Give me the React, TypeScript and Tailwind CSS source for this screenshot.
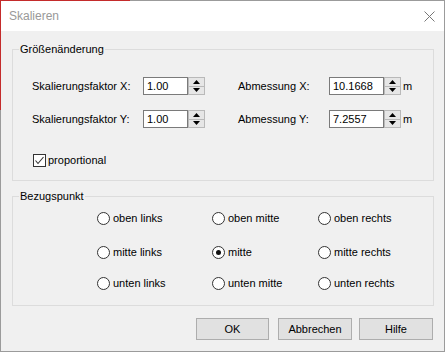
import React from "react";

function Spinner() {
  return (
    <div className="flex h-[18px] w-[17px] flex-col border border-[#b9b9b9] bg-[#e6e6e6]">
      <div className="flex flex-1 items-center justify-center border-b border-[#b9b9b9]">
        <svg width="7" height="4" viewBox="0 0 7 4"><path d="M0 4 L3.5 0 L7 4 Z" fill="#000" /></svg>
      </div>
      <div className="flex flex-1 items-center justify-center">
        <svg width="7" height="4" viewBox="0 0 7 4"><path d="M0 0 L3.5 4 L7 0 Z" fill="#000" /></svg>
      </div>
    </div>
  );
}

function NumField({ value, w }: { value: string; w: string }) {
  return (
    <div className="flex items-center">
      <div className={`flex h-[18px] items-center border border-[#7a7a7a] bg-white pl-[3px] ${w}`}>{value}</div>
      <Spinner />
    </div>
  );
}

function Radio({ label, checked }: { label: string; checked?: boolean }) {
  return (
    <div className="flex h-[14px] items-center">
      <div className="flex h-[13px] w-[13px] items-center justify-center rounded-full border border-[#333] bg-white">
        {checked && <div className="h-[5px] w-[5px] rounded-full bg-[#111]" />}
      </div>
      <span className="ml-[3px]">{label}</span>
    </div>
  );
}

export default function App() {
  return (
    <div className="relative flex h-[352px] w-[445px] flex-col border border-[#9b9b9b] bg-[#f0f0f0] font-['Liberation_Sans',Arial,sans-serif] text-[11px] leading-[14px] text-black">
      <div className="pointer-events-none absolute left-[-1px] top-[-1px] h-px w-[130px] bg-[#c42b2b]" />
      <div className="pointer-events-none absolute left-[-1px] top-[-1px] h-[110px] w-px bg-[#c42b2b]" />
      {/* title bar */}
      <div className="flex h-[30px] items-center justify-between bg-white pl-[8px] pr-[9px]">
        <span className="text-[12px] text-[#999]">Skalieren</span>
        <svg width="11" height="11" viewBox="0 0 11 11">
          <path d="M0.5 0.5 L10.5 10.5 M10.5 0.5 L0.5 10.5" stroke="#777" strokeWidth="1" />
        </svg>
      </div>

      {/* Größenänderung */}
      <fieldset className="ml-[11px] mt-[11px] h-[139px] w-[422px] border border-[#dcdcdc]">
        <legend className="ml-[6px] px-[1px] leading-[14px]">Größenänderung</legend>
        <div className="pl-[19px] pt-[21px]">
          <div className="flex items-center">
            <span className="w-[111px]">Skalierungsfaktor X:</span>
            <NumField value="1.00" w="w-[45px]" />
            <span className="ml-[33px] w-[91px]">Abmessung X:</span>
            <NumField value="10.1668" w="w-[55px]" />
            <span className="ml-[2px]">m</span>
          </div>
          <div className="mt-[15px] flex items-center">
            <span className="w-[111px]">Skalierungsfaktor Y:</span>
            <NumField value="1.00" w="w-[45px]" />
            <span className="ml-[33px] w-[91px]">Abmessung Y:</span>
            <NumField value="7.2557" w="w-[55px]" />
            <span className="ml-[2px]">m</span>
          </div>
          <div className="ml-[1px] mt-[25px] flex items-center">
            <div className="flex h-[13px] w-[13px] items-center justify-center border border-[#333] bg-white">
              <svg width="11" height="11" viewBox="0 0 11 11">
                <path d="M1.5 5.5 L4 8.5 L9.5 2" stroke="#333" strokeWidth="1.1" fill="none" />
              </svg>
            </div>
            <span className="ml-[2px]">proportional</span>
          </div>
        </div>
      </fieldset>

      {/* Bezugspunkt */}
      <fieldset className="ml-[11px] mt-[8px] h-[117px] w-[422px] border border-[#dcdcdc]">
        <legend className="ml-[6px] px-[1px] leading-[14px]">Bezugspunkt</legend>
        <div className="pl-[84px] pt-[8px]">
          <div className="grid grid-cols-[115px_106px_auto]">
            <Radio label="oben links" />
            <Radio label="oben mitte" />
            <Radio label="oben rechts" />
          </div>
          <div className="mt-[20px] grid grid-cols-[115px_106px_auto]">
            <Radio label="mitte links" />
            <Radio label="mitte" checked />
            <Radio label="mitte rechts" />
          </div>
          <div className="mt-[17px] grid grid-cols-[115px_106px_auto]">
            <Radio label="unten links" />
            <Radio label="unten mitte" />
            <Radio label="unten rechts" />
          </div>
        </div>
      </fieldset>

      {/* buttons */}
      <div className="ml-[195px] mt-[12px] flex">
        <button className="h-[22px] w-[73px] border border-[#adadad] bg-[#e1e1e1]">OK</button>
        <button className="ml-[9px] h-[22px] w-[74px] border border-[#adadad] bg-[#e1e1e1]">Abbrechen</button>
        <button className="ml-[7px] h-[22px] w-[74px] border border-[#adadad] bg-[#e1e1e1]">Hilfe</button>
      </div>
    </div>
  );
}
